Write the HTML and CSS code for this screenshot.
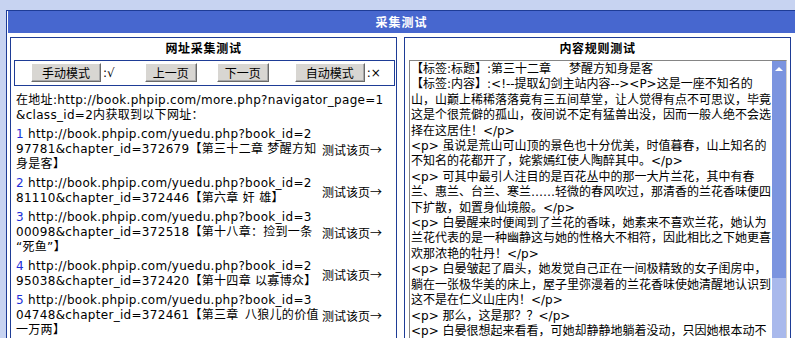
FILE: index.html
```html
<!DOCTYPE html>
<html lang="zh-CN">
<head>
<meta charset="utf-8">
<title>采集测试</title>
<link rel="stylesheet" href="styles.css">
</head>
<body>
<div class="frame">
  <div class="frame-head">采集测试</div>
  <div class="panels">
    <section class="panel">
      <h2 class="panel-title">网址采集测试</h2>
      <div class="modes">
        <span class="mode"><button class="btn btn-wide">手动模式</button><span class="flag">:√</span></span>
        <button class="btn nav-prev">上一页</button>
        <button class="btn nav-next">下一页</button>
        <span class="mode mode-auto"><button class="btn btn-wide">自动模式</button><span class="flag">:×</span></span>
      </div>
      <div class="urls">
        <p class="intro">在地址:http://book.phpip.com/more.php?navigator_page=1<br>&amp;class_id=2内获取到以下网址：</p>
        <div class="url-row">
          <div class="url"><span class="num">1</span> http://book.phpip.com/yuedu.php?book_id=2<br>97781&amp;chapter_id=372679【第三十二章 梦醒方知<br>身是客】</div>
          <a class="test">测试该页→</a>
        </div>
        <div class="url-row">
          <div class="url"><span class="num">2</span> http://book.phpip.com/yuedu.php?book_id=2<br>81110&amp;chapter_id=372446【第六章 奸 雄】</div>
          <a class="test">测试该页→</a>
        </div>
        <div class="url-row">
          <div class="url"><span class="num">3</span> http://book.phpip.com/yuedu.php?book_id=3<br>00098&amp;chapter_id=372518【第十八章：捡到一条<br>“死鱼”】</div>
          <a class="test">测试该页→</a>
        </div>
        <div class="url-row">
          <div class="url"><span class="num">4</span> http://book.phpip.com/yuedu.php?book_id=2<br>95038&amp;chapter_id=372420【第十四章 以寡博众】</div>
          <a class="test">测试该页→</a>
        </div>
        <div class="url-row">
          <div class="url"><span class="num">5</span> http://book.phpip.com/yuedu.php?book_id=3<br>04748&amp;chapter_id=372461【第三章&ensp;八狼儿的价值<br>一万两】</div>
          <a class="test">测试该页→</a>
        </div>
      </div>
    </section>
    <section class="panel">
      <h2 class="panel-title">内容规则测试</h2>
      <div class="rule-box">
        <div class="rule-text">【标签:标题】:第三十二章&emsp;&ensp;梦醒方知身是客<br>【标签:内容】:&lt;!--提取幻剑主站内容--&gt;&lt;P&gt;这是一座不知名的<br>山，山巅上稀稀落落竟有三五间草堂，让人觉得有点不可思议，毕竟<br>这是个很荒僻的孤山，夜间说不定有猛兽出没，因而一般人绝不会选<br>择在这居住！&lt;/p&gt;<br>&lt;p&gt; 虽说是荒山可山顶的景色也十分优美，时值暮春，山上知名的<br>不知名的花都开了，姹紫嫣红使人陶醉其中。&lt;/p&gt;<br>&lt;p&gt; 可其中最引人注目的是百花丛中的那一大片兰花，其中有春<br>兰、惠兰、台兰、寒兰……轻微的春风吹过，那清香的兰花香味便四<br>下扩散，如置身仙境般。&lt;/p&gt;<br>&lt;p&gt; 白晏醒来时便闻到了兰花的香味，她素来不喜欢兰花，她认为<br>兰花代表的是一种幽静这与她的性格大不相符，因此相比之下她更喜<br>欢那浓艳的牡丹！&lt;/p&gt;<br>&lt;p&gt; 白晏皱起了眉头，她发觉自己正在一间极精致的女子闺房中，<br>躺在一张极华美的床上，屋子里弥漫着的兰花香味使她清醒地认识到<br>这不是在仁义山庄内！&lt;/p&gt;<br>&lt;p&gt; 那么，这是那？？&lt;/p&gt;<br>&lt;p&gt; 白晏很想起来看看，可她却静静地躺着没动，只因她根本动不<br>了。&lt;/p&gt;</div>
        <div class="scrollbar">
          <div class="sb-up"><span class="sb-arrow"></span></div>
          <div class="sb-thumb"></div>
        </div>
      </div>
    </section>
  </div>
</div>
</body>
</html>
```

FILE: styles.css
```css
html, body {
  margin: 0;
  padding: 0;
  overflow: hidden;
  background: #c7d3f1;
}

body {
  font-family: "DejaVu Sans", "Noto Sans CJK SC", sans-serif;
  font-size: 12px;
  color: #000;
  padding-top: 10px;
}

.frame {
  margin-left: 6px;
  height: 400px;
  border: 1px solid #1e3c96;
  border-right: none;
  background: #fff;
  padding-left: 1px;
}

.frame-head {
  height: 22px;
  line-height: 22px;
  background: #4767cf;
  color: #fff;
  font-weight: bold;
  text-align: center;
  font-family: "Noto Sans CJK SC", sans-serif;
  letter-spacing: 1px;
}

.panels {
  display: flex;
  gap: 7px;
  padding: 4px 0 0 2px;
}

.panel {
  width: 387px;
  height: 360px;
  box-sizing: border-box;
  border: 1px solid #1e3c96;
}

.panel-title {
  margin: 0;
  font-family: "Noto Sans CJK SC", sans-serif;
  font-size: 12px;
  font-weight: bold;
  letter-spacing: 0.7px;
  line-height: 15px;
  padding: 2px 0 5px;
  text-align: center;
}

.modes {
  margin-left: 3px;
  width: 381px;
  height: 26px;
  box-sizing: border-box;
  border: 1px solid #1e3c96;
  display: flex;
  align-items: center;
  padding: 0 0 1px 16px;
}

.mode {
  display: flex;
  align-items: center;
}

.btn {
  height: 19px;
  padding: 0 7px;
  margin: 0;
  font-family: "Noto Sans CJK SC", sans-serif;
  font-size: 12px;
  line-height: 15px;
  color: #000;
  background: #d8d6d2;
  border: 1px solid;
  border-color: #ffffff #6a6a6a #6a6a6a #ffffff;
  box-shadow: inset -1px -1px 0 #a8a8a8;
}

.btn-wide {
  padding: 0 10px;
}

.flag {
  margin-left: 2px;
  font-size: 12px;
}

.nav-prev { margin-left: 30px; }
.nav-next { margin-left: 20px; }
.mode-auto { margin-left: 26px; }

.urls {
  padding: 7px 0 0 5px;
  letter-spacing: 0.3px;
  line-height: 15px;
}

.intro {
  margin: 0 0 2px;
  white-space: nowrap;
}

.url-row {
  display: flex;
  align-items: center;
  padding: 2px 0;
}

.url {
  width: 306px;
  flex: none;
  white-space: nowrap;
}

.num {
  color: #1b2fd8;
}

.test {
  white-space: nowrap;
  letter-spacing: 0;
  color: #000;
  font-family: "Noto Sans CJK SC", "DejaVu Sans", sans-serif;
}

.rule-box {
  margin-left: 4px;
  width: 378px;
  height: 320px;
  box-sizing: border-box;
  border: 1px solid;
  border-color: #858585 #d6d3ce #d6d3ce #858585;
  display: flex;
}

.rule-text {
  flex: 1;
  min-width: 0;
  padding: 1px 0 0 1px;
  line-height: 15.4px;
  white-space: nowrap;
  overflow: hidden;
}

.scrollbar {
  width: 14px;
  flex: none;
  display: flex;
  flex-direction: column;
  background: #a9b9ec;
}

.sb-up {
  height: 16px;
  background: #7b94df;
  display: flex;
  align-items: center;
  justify-content: center;
}

.sb-arrow {
  width: 0;
  height: 0;
  border-left: 4px solid transparent;
  border-right: 4px solid transparent;
  border-bottom: 4px solid #fff;
}

.sb-thumb {
  height: 201px;
  background: #7b94df;
}
```
